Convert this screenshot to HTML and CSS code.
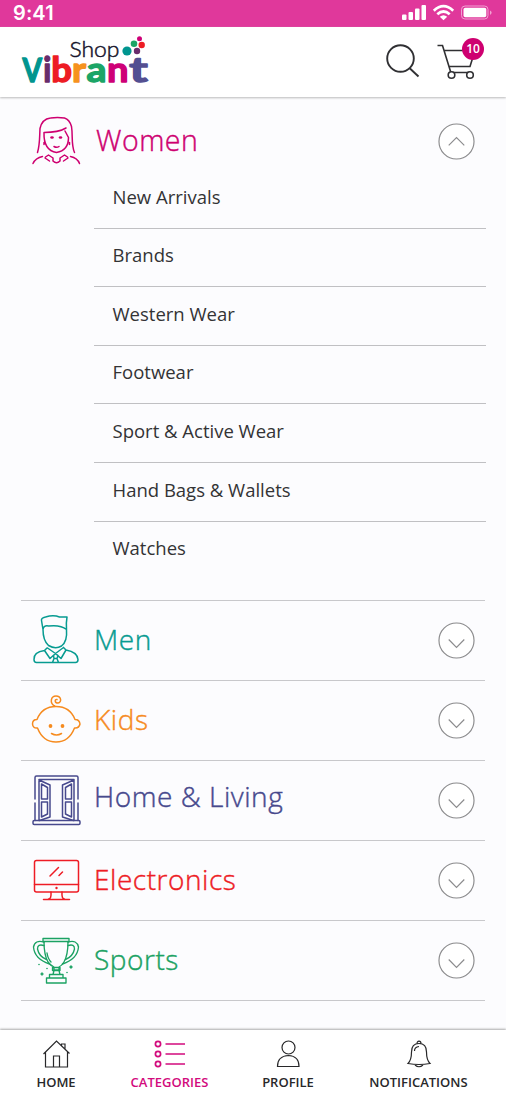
FILE: index.html
```html
<!DOCTYPE html>
<html lang="en">
<head>
<meta charset="utf-8">
<title>Shop Vibrant</title>
<link rel="stylesheet" href="styles.css">
</head>
<body>
<div class="app">
  <div class="status">
    <span class="time">9:41</span>
    <svg class="signals" width="92" height="18" viewBox="0 0 92 18">
      <g fill="#fff"><rect x="0" y="10.500" width="4.500" height="5.500" rx="1"/><rect x="6.500" y="8" width="4.500" height="8" rx="1"/><rect x="13" y="4.500" width="4.500" height="11.500" rx="1"/><rect x="19.500" y="1" width="4.500" height="15" rx="1"/></g>
      <g fill="none" stroke="#fff" stroke-width="2.700"><path d="M31.800 6.700Q41.500-2.300 51.200 6.700"/><path d="M35.300 10.300Q41.500 4.700 47.700 10.300"/></g><path d="M37.800 12.700Q41.500 9.600 45.200 12.700L41.500 16.300Z" fill="#fff"/>
      <rect x="59.500" y="2" width="26.500" height="13" rx="3.500" fill="none" stroke="#f2a0d2"/><rect x="61.500" y="3.700" width="22.800" height="9.600" rx="1.800" fill="#fff"/><path d="M88 6.500q3.400 2 0 4.500z" fill="#f2a0d2"/>
    </svg>
  </div>
  <header class="header">
    <svg class="logo" width="132" height="54" viewBox="0 0 132 54">
      <text class="shop" x="48.500" y="27" textLength="50" lengthAdjust="spacingAndGlyphs">Shop</text>
      <g class="vibrant">
        <text class="cap" x="1.500" y="52" textLength="19.500" lengthAdjust="spacingAndGlyphs" fill="#00958f" stroke="#00958f">V</text>
        <text x="22.300" y="52" textLength="8" lengthAdjust="spacingAndGlyphs" fill="#692c6b" stroke="#692c6b">i</text>
        <text x="30.300" y="52" textLength="20.700" lengthAdjust="spacingAndGlyphs" fill="#ed1c24" stroke="#ed1c24">b</text>
        <text x="51" y="52" textLength="14" lengthAdjust="spacingAndGlyphs" fill="#f6921e" stroke="#f6921e">r</text>
        <text x="65.500" y="52" textLength="20" lengthAdjust="spacingAndGlyphs" fill="#1ba566" stroke="#1ba566">a</text>
        <text x="86" y="52" textLength="21.500" lengthAdjust="spacingAndGlyphs" fill="#ce0077" stroke="#ce0077">n</text>
        <text x="108.200" y="52" textLength="18.500" lengthAdjust="spacingAndGlyphs" fill="#534f91" stroke="#534f91">t</text>
      </g>
      <circle cx="106" cy="21" r="4.600" fill="#00958f"/><circle cx="113" cy="13.700" r="3.300" fill="#1ba566"/><circle cx="118.500" cy="8.700" r="2.500" fill="#ce0077"/><circle cx="120.700" cy="15" r="3.200" fill="#ed1c24"/><circle cx="116" cy="21" r="3.200" fill="#692c6b"/>
    </svg>
    <div class="actions">
      <svg width="36" height="36" viewBox="0 0 36 36" fill="none" stroke="#303033" stroke-width="1.900"><circle cx="15.500" cy="15.500" r="13.300"/><path d="M24.700 25.200L33.500 33.500"/></svg>
      <div class="cart">
        <svg width="40" height="37" viewBox="0 0 40 37" fill="none" stroke="#303033" stroke-width="1.600"><path d="M.5 2.500H5.500L14 30M6.500 7.500H38L33 23.500H12M14 29.500H34"/><circle cx="14.500" cy="32" r="3.300" fill="#fff"/><circle cx="33" cy="32" r="3.300" fill="#fff"/></svg>
        <span class="badge">10</span>
      </div>
    </div>
  </header>
  <main class="content">
    <section class="group women">
      <div class="row">
        <svg class="icon" width="50" height="50" viewBox="-.5 -.5 50 50"><path d="M6 36C8.500 28 8 20 8.500 12Q10.500 2.500 19 1.500Q26 .5 33 1.500Q38 3 40 10C41.500 19 39.500 28 43 36"/><path d="M34.500 11.500Q27 16 12.500 16Q12 34 25 36Q37 34 37 21L33.500 14.500M12.500 26V28M38 26V28"/><g class="solid"><ellipse cx="20.500" cy="21" rx="1.800" ry="1.200"/><ellipse cx="29" cy="21" rx="1.800" ry="1.200"/></g><path d="M22.500 30q2.700 1.700 5 0"/><path d="M1.500 47Q4 41.500 11 40M48 47Q46 41.500 39 40M14 40.500L17 38.500L21.500 41.500V44.500Q25 48 28.500 44.500V41.500L33 38.500L36 40.500M13.500 41.500L18 44.500M36.500 41.500L32 44.500"/></svg>
        <h2 class="name">Women</h2>
        <svg class="toggle" width="37" height="37" viewBox="0 0 38 38"><circle cx="19" cy="19" r="18"/><path d="M11 23L19 15L27 23"/></svg>
      </div>
      <ul class="sub">
        <li><span>New Arrivals</span></li><li><span>Brands</span></li><li><span>Western Wear</span></li><li><span>Footwear</span></li><li><span>Sport &amp; Active Wear</span></li><li><span>Hand Bags &amp; Wallets</span></li><li><span>Watches</span></li>
      </ul>
    </section>
    <section class="group row men">
      <svg class="icon" width="50" height="50" viewBox="-.5 1.500 50 50"><path d="M11.500 16L10 7Q9.500 4.500 14 3.500Q22 1 28 3.500H35.500Q34.500 9 35 16M11.500 16Q12 11.500 17 12.500Q29 11 35 16Q36 28 30 32.500Q24 36 17 32Q11.500 27 11.500 16"/><path d="M15.500 34.500L13 37Q2 38.500 2.500 46Q2.500 49 5 49H44Q46.500 49 46.500 46Q46 38.500 34.500 36.500L32 34M13 37L18.500 45L24 40L29.500 45L34.500 36.500M16 34.500L24 40L32 34M22 42L24 40L26.500 42L25.500 45L27 49M25.500 45H22.500L21 49M22 42L22.500 45"/></svg>
      <h2 class="name">Men</h2>
      <svg class="toggle" width="37" height="37" viewBox="0 0 38 38"><circle cx="19" cy="19" r="18"/><path d="M11 18L19 26L27 18"/></svg>
    </section>
    <section class="group row kids">
      <svg class="icon" width="50" height="50" viewBox="0 -4 50 50"><path d="M6 20.500Q11 7.500 25 7.500Q39 7.500 44 20.500Q48.500 20.500 49 25Q48 29.500 43.500 29Q38 43 25 43Q12 43 6.500 29Q2 29.500 1.500 25Q1.500 20.500 6 20.500ZM24 7.500C18 4 20-3 25-3C30.500-3 31 3.500 27 4C23.500 4 23.500 0 26 .5"/><path d="M20.500 34.500Q25.500 37.500 30.500 34.500"/><circle class="solid" cx="19.500" cy="27" r="1.900"/><circle class="solid" cx="31.500" cy="27" r="1.900"/></svg>
      <h2 class="name">Kids</h2>
      <svg class="toggle" width="37" height="37" viewBox="0 0 38 38"><circle cx="19" cy="19" r="18"/><path d="M11 18L19 26L27 18"/></svg>
    </section>
    <section class="group row home">
      <svg class="icon" width="50" height="50" viewBox="-.5 -1 50 50"><path d="M3.500 23V1.500Q3.500 0 5 0H45Q46.500 0 46.500 1.500V23M3.500 27V44.500M46.500 27V44.500M7.500 44.500V3.500H42.500V44.500M7.500 4L18.500 9V41L8 44.500M42.500 4L31 9V41L42 44.500"/><path d="M10 8L16 11.500V23H10ZM10 26H16V38L10 41ZM40 8L34 11.500V23H40ZM40 26H34V38L40 41Z"/><rect x="1.500" y="44.500" width="47" height="4" rx="1.200"/></svg>
      <h2 class="name">Home &amp; Living</h2>
      <svg class="toggle" width="37" height="37" viewBox="0 0 38 38"><circle cx="19" cy="19" r="18"/><path d="M11 18L19 26L27 18"/></svg>
    </section>
    <section class="group row electronics">
      <svg class="icon" width="50" height="50" viewBox="0 -1 50 50"><rect x="3.500" y="4.500" width="44" height="31.500" rx="2"/><path d="M3.500 28.500H47.500M20 36Q20.500 43 17.500 43M31 36Q30.500 43 33.500 43M12.500 43.500H38.500M19 20L27.500 11.500M28 19.500L31.500 16"/><circle class="solid" cx="25.500" cy="32" r="1.200"/></svg>
      <h2 class="name">Electronics</h2>
      <svg class="toggle" width="37" height="37" viewBox="0 0 38 38"><circle cx="19" cy="19" r="18"/><path d="M11 18L19 26L27 18"/></svg>
    </section>
    <section class="group row sports">
      <svg class="icon" width="50" height="50" viewBox="0 -1 50 50"><path d="M12 2.500H38V5.500H12ZM13 5.500Q13 19 17 26Q19.500 29.500 23 31V34H28V31Q31 29.500 33 26Q37 19 37 5.500M21.500 31.500H29V34.500H21.500ZM23 34.500L22 38.500H29L28 34.500M18.500 38.500H32V42H18.500ZM15.500 42H35V47H15.500ZM16 17Q17 23 20 26"/><path d="M13 6Q4 3.500 2.500 11Q3.500 23 18.500 28M13 9.500Q6.500 7.500 6.500 13Q8 20.500 15.500 23.500M37 6Q46 3.500 47.500 11Q46.500 23 31.500 28M37 9.500Q43.500 7.500 43.500 13Q42 20.500 34.500 23.500"/><g class="solid"><path d="M11 35.800L11.800 37.200L13.200 38L11.800 38.800L11 40.200L10.200 38.800L8.800 38L10.200 37.200ZM40 28.800L40.900 30.200L42.300 31L40.900 31.800L40 33.200L39.100 31.800L37.700 31L39.100 30.200Z"/><circle cx="8" cy="28.500" r=".8"/><circle cx="16" cy="32.500" r=".8"/><circle cx="36" cy="36.500" r=".8"/></g></svg>
      <h2 class="name">Sports</h2>
      <svg class="toggle" width="37" height="37" viewBox="0 0 38 38"><circle cx="19" cy="19" r="18"/><path d="M11 18L19 26L27 18"/></svg>
    </section>
  </main>
  <nav class="tabs">
    <div class="tab"><svg width="30" height="30" viewBox="0 0 30 30"><path d="M2.500 15L15.500 2L28.500 14.500M4.500 13V28H26.500V13M12.500 28V17H18.500V28M20.500 6.500V5H24V10"/></svg><span>HOME</span></div>
    <div class="tab active"><svg width="32" height="30" viewBox="0 0 32 30"><circle cx="4" cy="5" r="2.600"/><circle cx="4" cy="15" r="2.600"/><circle cx="4" cy="25" r="2.600"/><path d="M11.500 5H31M11.500 15H31M11.500 25H31"/></svg><span>CATEGORIES</span></div>
    <div class="tab"><svg width="30" height="30" viewBox="0 0 30 30"><circle cx="15.500" cy="8.500" r="6.500"/><path d="M4.500 27.500Q4.500 17 15.500 16.500Q26 17 26 27.500Z"/></svg><span>PROFILE</span></div>
    <div class="tab bell"><svg width="30" height="30" viewBox="0 0 30 30"><path d="M4 24.500Q7.500 21 7.500 13Q7.500 4.500 15 4.500Q22.500 4.500 22.500 13Q22.500 21 26 24.500Q15 26.500 4 24.500ZM11 26Q15 29.500 19 26M13 4.500Q13 2.200 15 2.200T17 4.500M10.500 12Q10.500 8 15 7.500"/></svg><span>NOTIFICATIONS</span></div>
  </nav>
</div>
</body>
</html>
```
FILE: styles.css
```css
* { box-sizing: border-box; }
body { margin: 0; font-family: "Open Sans", "Noto Sans", sans-serif; background: #fcfcfe; color: #2b2b2d; }
.app { height: 1095px; display: flex; flex-direction: column; overflow: hidden; }
.status { height: 27px; flex: none; background: #e0389b; display: flex; justify-content: space-between; align-items: center; padding: 0 12px 1px 13px; color: #fff; }
.time { font: 600 20px/26px Inter, sans-serif; letter-spacing: .1px; }
.header { height: 70px; flex: none; background: #fff; display: flex; justify-content: space-between; padding: 3px 26px 0 21px; box-shadow: 0 1px 2px #bbb; }
.logo { flex: none; overflow: visible; }
.shop { font: 300 22px Lato, sans-serif; fill: #17152c; stroke: #17152c; stroke-width: .5; }
.vibrant { font: 700 35px Lato, sans-serif; stroke-width: 1.400; stroke-linejoin: round; }
.cap { font-size: 33px; }
.actions { display: flex; gap: 16px; padding-top: 13px; }
.cart { position: relative; width: 43px; }
.badge { position: absolute; left: 25px; top: -5px; width: 22px; height: 22px; border-radius: 50%; background: #ce0070; color: #fff; font-size: 12px; font-weight: 600; line-height: 21px; text-align: center; }
.content { flex: 1; padding: 0 21px; }
.group { border-bottom: 1px solid #c8c8cb; }
.row { display: flex; align-items: center; height: 80.100px; padding: 0 10px 1px 10px; }
.women { height: 504px; padding-top: 4px; }
.icon { flex: none; overflow: visible; fill: none; stroke: currentColor; stroke-width: 1.500; stroke-linecap: round; stroke-linejoin: round; }
.sports .icon { stroke-width: 1.350; }
.icon .solid { fill: currentColor; stroke: none; }
.name { flex: 1; margin: 0 0 0 13px; padding-bottom: 3px; font-size: 28px; line-height: 38px; font-weight: 300; letter-spacing: .55px; -webkit-text-stroke: .4px currentColor; }
.women .row { padding-bottom: 0; }
.women .name { margin-left: 15px; padding-bottom: 3px; font-size: 28.500px; letter-spacing: .5px; }
.toggle { flex: none; fill: #fff; stroke: #8b8b8d; stroke-width: 1.200; }
.toggle path { fill: none; }
.sub { margin: -11px -1px 0 0; padding: 0 0 0 73px; list-style: none; }
.sub li { height: 58.600px; padding: 11.500px 0 0 18.500px; font-size: 18.500px; line-height: 30px; border-bottom: 1px solid #c0c0c3; font-weight: 400; }
.sub li:last-child { border: 0; }
.women { color: #ce0070; }
.women .sub { color: #333335; }
.men { color: #079b91; }
.kids { color: #f68b1f; }
.home { color: #47498d; }
.home .name { padding-bottom: 9px; }
.electronics { color: #ee1c25; }
.sports { color: #1ba263; }
.tabs { height: 65px; flex: none; display: grid; grid-template-columns: 112px 115px 122px 139px; background: #fff; box-shadow: 0 -1px 2px #aaa; padding-top: 9px; }
.tab { display: flex; flex-direction: column; align-items: center; font-size: 13px; font-weight: 600; line-height: 18px; gap: 4px; color: #28282a; }
.tab svg { fill: none; stroke: currentColor; stroke-width: 1.200; }
.tab.active { color: #d20b7d; }
.tab.active svg { stroke-width: 1.700; }
```
